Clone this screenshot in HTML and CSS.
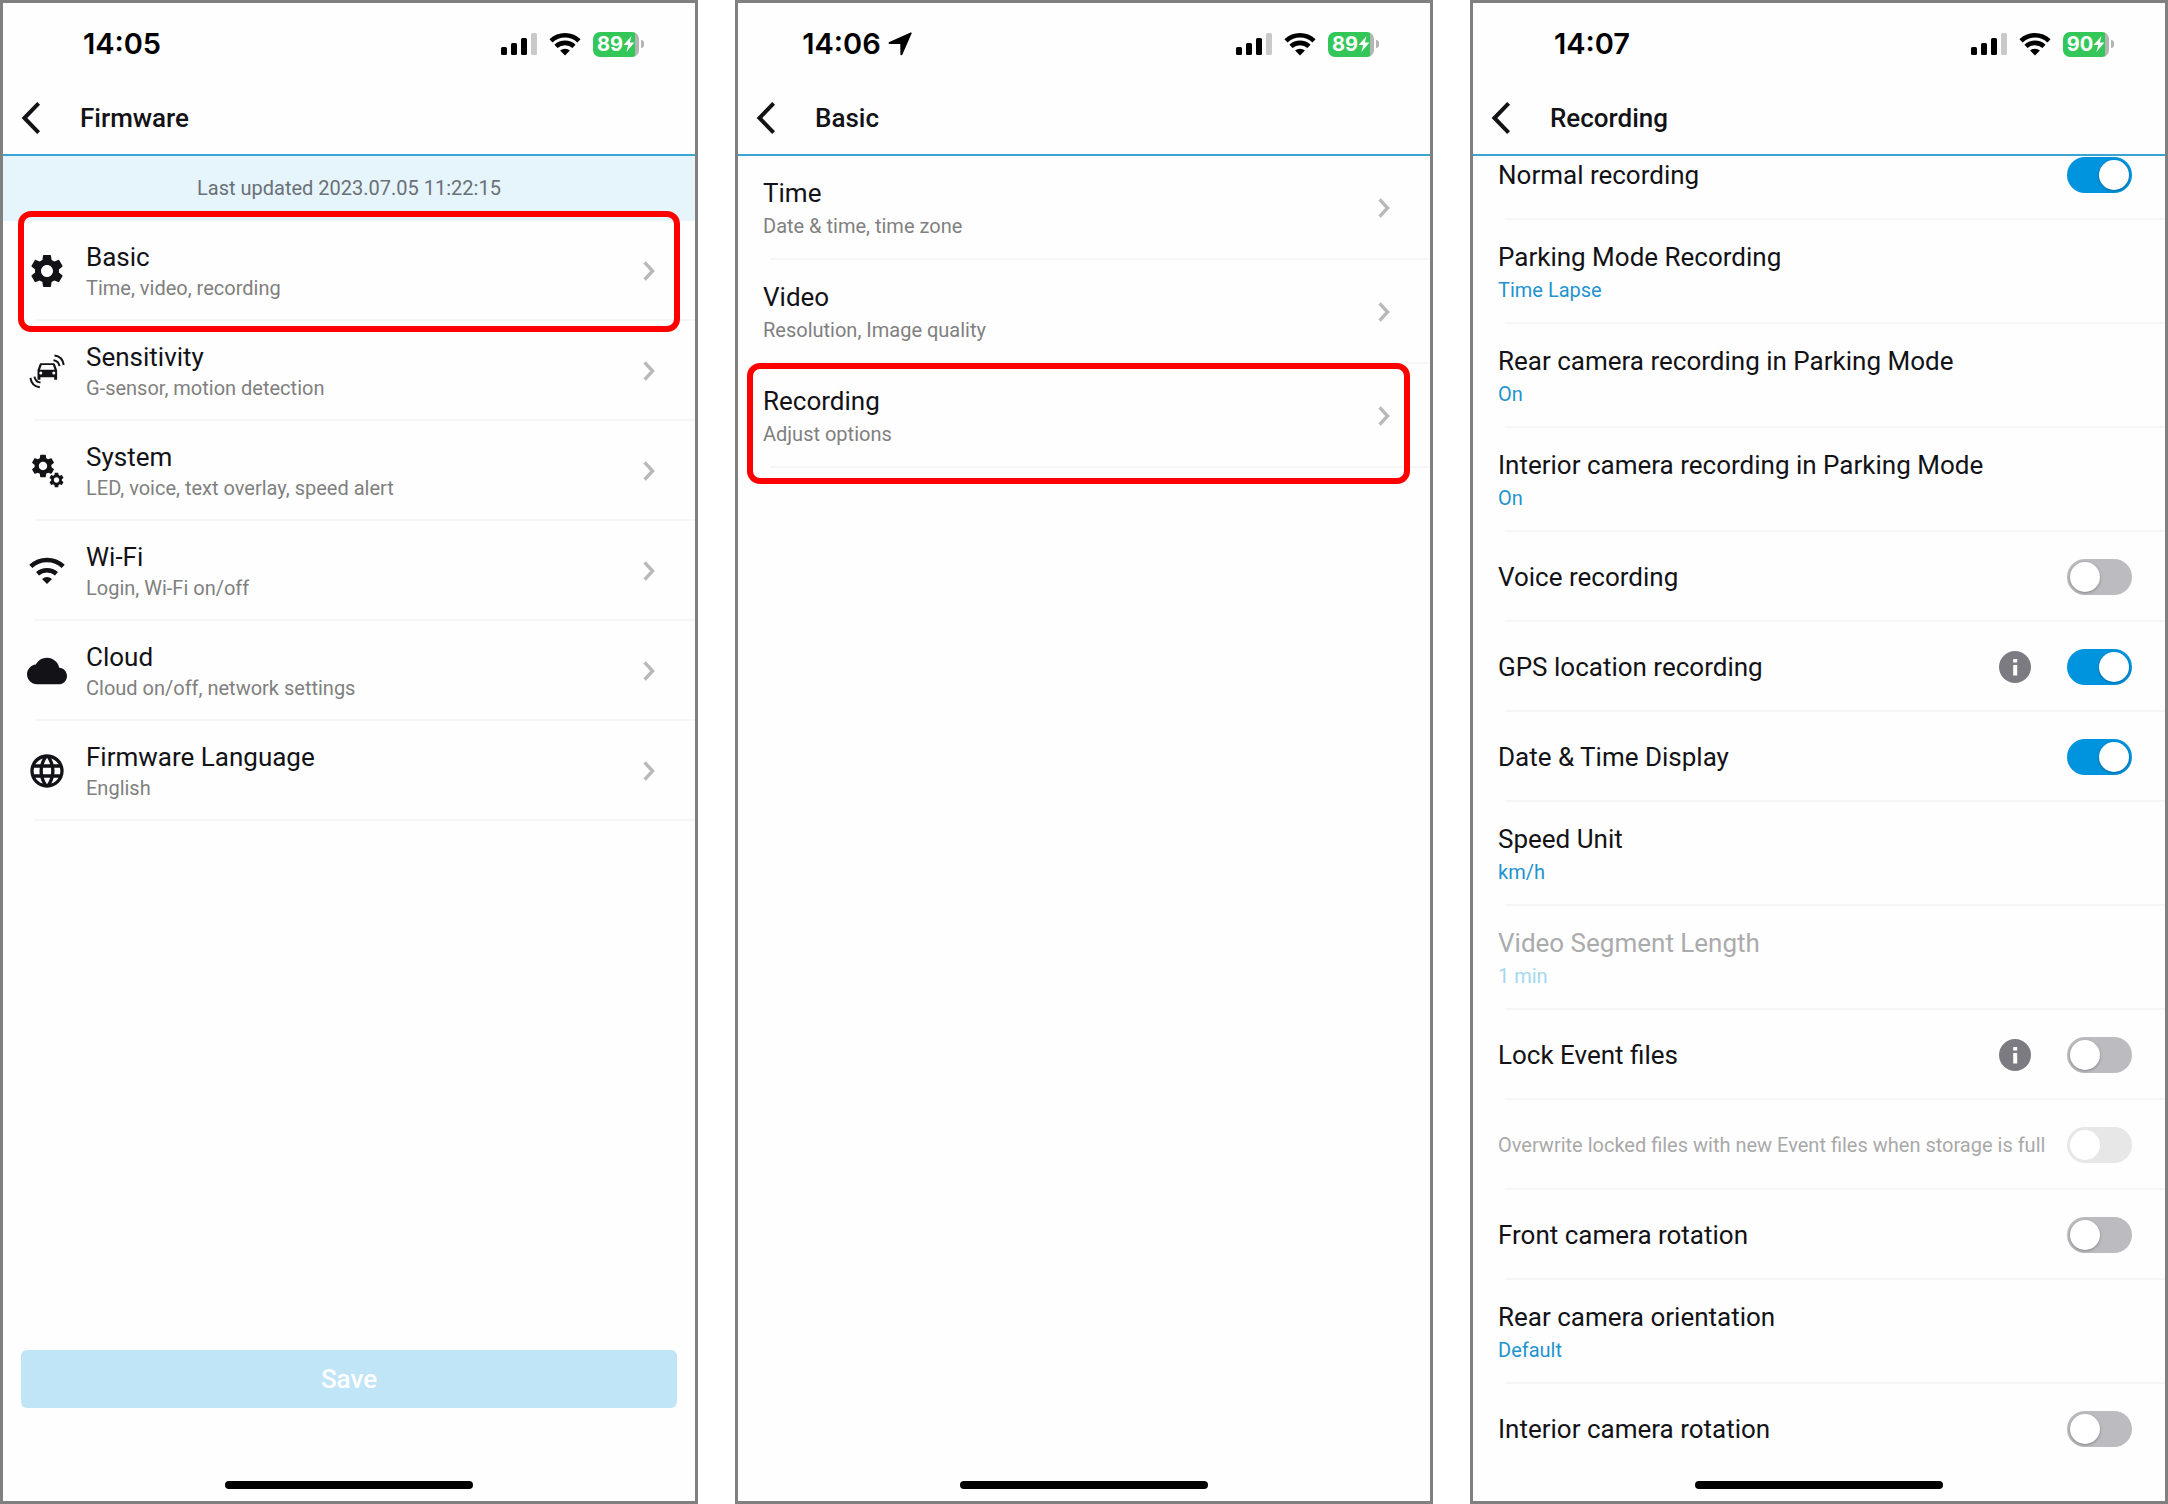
FILE: index.html
```
<!DOCTYPE html>
<html lang="en">
<head>
    <meta charset="UTF-8">
    <meta name="viewport" content="width=device-width, initial-scale=1.0">
    <title>Firmware settings</title>
    <link rel="stylesheet" href="styles.css">
</head>
<body>

<!-- shared icons -->
<svg class="sprite" aria-hidden="true">
    <symbol id="signal" viewBox="0 0 36 24">
        <rect x="0" y="15" width="6" height="8" rx="1.5"/>
        <rect x="10" y="11" width="6" height="12" rx="1.5"/>
        <rect x="20" y="6" width="6" height="17" rx="1.5"/>
        <rect x="30" y="1" width="6" height="22" rx="1.5" fill="#c9c9c9"/>
    </symbol>
    <symbol id="wifi" viewBox="0 0 32 24">
        <path d="M16 23.5l-4.9-4.9a7.3 7.3 0 0 1 9.8 0z"/>
        <path d="M7 14.4a13.2 13.2 0 0 1 18 0M2 8.8a20.4 20.4 0 0 1 28 0" fill="none" stroke="currentColor" stroke-width="4.6"/>
    </symbol>
    <symbol id="bolt" viewBox="0 0 12 16">
        <path d="M8.6 0L0.6 9h4.6L3.4 16 11.4 6.6H6.8z"/>
    </symbol>
    <symbol id="back" viewBox="0 0 20 32">
        <path d="M17.6 1.4L3.4 16l14.2 14.6" fill="none" stroke="currentColor" stroke-width="4"/>
    </symbol>
    <symbol id="chevron" viewBox="0 0 12 20">
        <path d="M1.6 1.4L9.6 10l-8 8.6" fill="none" stroke="currentColor" stroke-width="3.4"/>
    </symbol>
    <symbol id="gear" viewBox="0 0 24 24">
        <path d="M19.14 12.94c.04-.3.06-.61.06-.94 0-.32-.02-.64-.07-.94l2.03-1.58c.18-.14.23-.41.12-.61l-1.92-3.32c-.12-.22-.37-.29-.59-.22l-2.39.96c-.5-.38-1.03-.7-1.62-.94l-.36-2.54c-.04-.24-.24-.41-.48-.41h-3.84c-.24 0-.43.17-.47.41l-.36 2.54c-.59.24-1.13.57-1.62.94l-2.39-.96c-.22-.08-.47 0-.59.22L2.74 8.87c-.12.21-.08.47.12.61l2.03 1.58c-.05.3-.09.63-.09.94s.02.64.07.94l-2.03 1.58c-.18.14-.23.41-.12.61l1.92 3.32c.12.22.37.29.59.22l2.39-.96c.5.38 1.03.7 1.62.94l.36 2.54c.05.24.24.41.48.41h3.84c.24 0 .44-.17.47-.41l.36-2.54c.59-.24 1.13-.56 1.62-.94l2.39.96c.22.08.47 0 .59-.22l1.92-3.32c.12-.22.07-.47-.12-.61l-2.01-1.58zM12 15.6c-1.98 0-3.6-1.62-3.6-3.6s1.62-3.6 3.6-3.6 3.6 1.62 3.6 3.6-1.62 3.6-3.6 3.6z"/>
    </symbol>
</svg>

<div class="screens">

    <!-- Firmware -->
    <section class="phone">
        <div class="status">
            <div class="clock">14:05</div>
            <div class="indicators">
                <svg class="signal"><use href="#signal"/></svg>
                <svg class="wifi"><use href="#wifi"/></svg>
                <div class="battery"><span>89</span><svg><use href="#bolt"/></svg></div>
            </div>
        </div>
        <header class="bar">
            <button class="back" aria-label="Back"><svg><use href="#back"/></svg></button>
            <h1>Firmware</h1>
        </header>
        <main class="content">
            <p class="updated">Last updated 2023.07.05 11:22:15</p>
            <nav class="list icons">
                <a class="row highlight" href="#">
                    <svg class="icon" viewBox="0 0 24 24"><use href="#gear"/></svg>
                    <span class="text"><span class="title">Basic</span><span class="sub">Time, video, recording</span></span>
                    <svg class="chevron"><use href="#chevron"/></svg>
                </a>
                <a class="row" href="#">
                    <svg class="icon" viewBox="0 0 40 40">
                        <path fill-rule="evenodd" d="M14.2 12.2h12.2c.8 0 1.4.5 1.7 1.2l2 5.8v9.6h-2.9v-2.5H13.4v2.5h-2.9v-9.6l2-5.8c.3-.7.9-1.2 1.7-1.2zm.5 1.7l-1.7 4.9h14.6l-1.7-4.900zM13.8 23.4a1.5 1.5 0 1 0 0-3 1.5 1.5 0 0 0 0 3zM26.8 23.4a1.5 1.5 0 1 0 0-3 1.5 1.5 0 0 0 0 3z"/>
                        <path d="M26.5 9.2c3.2.4 5.4 2.6 6 6M27.5 4.6c5 .6 8.4 4.2 9.2 9.4M13.5 31.6c-3.2-.4-5.4-2.6-6-6M12.8 36.2c-5-.6-8.6-4.2-9.4-9.4" fill="none" stroke="currentColor" stroke-width="2"/>
                    </svg>
                    <span class="text"><span class="title">Sensitivity</span><span class="sub">G-sensor, motion detection</span></span>
                    <svg class="chevron"><use href="#chevron"/></svg>
                </a>
                <a class="row" href="#">
                    <svg class="icon" viewBox="0 0 40 40">
                        <use href="#gear" x="2" y="1" width="28" height="28"/>
                        <use href="#gear" x="20.5" y="20" width="18" height="18"/>
                    </svg>
                    <span class="text"><span class="title">System</span><span class="sub">LED, voice, text overlay, speed alert</span></span>
                    <svg class="chevron"><use href="#chevron"/></svg>
                </a>
                <a class="row" href="#">
                    <svg class="icon" viewBox="0 0 40 40">
                        <path d="M20 33l-5-5a8 8 0 0 1 10 0z"/>
                        <path d="M10.500 22.800a14.500 14.500 0 0 1 19 0M3.800 15.400a23.500 23.500 0 0 1 32.400 0" fill="none" stroke="currentColor" stroke-width="4.500"/>
                    </svg>
                    <span class="text"><span class="title">Wi-Fi</span><span class="sub">Login, Wi-Fi on/off</span></span>
                    <svg class="chevron"><use href="#chevron"/></svg>
                </a>
                <a class="row" href="#">
                    <svg class="icon" viewBox="0 0 24 24"><path d="M19.35 10.04C18.67 6.59 15.64 4 12 4 9.11 4 6.6 5.64 5.35 8.04 2.34 8.36 0 10.91 0 14c0 3.31 2.69 6 6 6h13c2.76 0 5-2.24 5-5 0-2.64-2.05-4.78-4.65-4.96z"/></svg>
                    <span class="text"><span class="title">Cloud</span><span class="sub">Cloud on/off, network settings</span></span>
                    <svg class="chevron"><use href="#chevron"/></svg>
                </a>
                <a class="row" href="#">
                    <svg class="icon" viewBox="0 0 24 24"><path d="M11.99 2C6.47 2 2 6.48 2 12s4.47 10 9.99 10C17.52 22 22 17.52 22 12S17.52 2 11.99 2zm6.93 6h-2.95c-.32-1.25-.78-2.45-1.38-3.56 1.84.63 3.37 1.91 4.33 3.56zM12 4.04c.83 1.2 1.48 2.53 1.91 3.96h-3.82c.43-1.43 1.08-2.76 1.91-3.96zM4.26 14C4.1 13.36 4 12.69 4 12s.1-1.36.26-2h3.38c-.08.66-.14 1.32-.14 2s.06 1.34.14 2H4.26zm.82 2h2.95c.32 1.25.78 2.45 1.38 3.56-1.84-.63-3.37-1.9-4.33-3.56zm2.95-8H5.08c.96-1.66 2.49-2.93 4.33-3.56C8.81 5.55 8.35 6.75 8.03 8zM12 19.96c-.83-1.2-1.48-2.53-1.91-3.96h3.82c-.43 1.43-1.08 2.76-1.91 3.96zM14.34 14H9.66c-.09-.66-.16-1.32-.16-2s.07-1.35.16-2h4.68c.09.65.16 1.32.16 2s-.07 1.34-.16 2zm.25 5.56c.6-1.11 1.06-2.31 1.38-3.56h2.95c-.96 1.65-2.49 2.93-4.33 3.56zM16.36 14c.08-.66.14-1.32.14-2s-.06-1.34-.14-2h3.38c.16.64.26 1.31.26 2s-.1 1.36-.26 2h-3.38z"/></svg>
                    <span class="text"><span class="title">Firmware Language</span><span class="sub">English</span></span>
                    <svg class="chevron"><use href="#chevron"/></svg>
                </a>
            </nav>
            <button class="save" disabled>Save</button>
        </main>
        <div class="home"></div>
    </section>

    <!-- Basic -->
    <section class="phone">
        <div class="status">
            <div class="clock">14:06 <svg viewBox="0 0 24 24"><path d="M22.6.6c.8-.3 1.3.2 1 1L14.4 22.6c-.5 1.1-2 .9-2-.4l-.1-10.100-10.600-.2c-1.300 0-1.500-1.500-.4-2z"/></svg></div>
            <div class="indicators">
                <svg class="signal"><use href="#signal"/></svg>
                <svg class="wifi"><use href="#wifi"/></svg>
                <div class="battery"><span>89</span><svg><use href="#bolt"/></svg></div>
            </div>
        </div>
        <header class="bar">
            <button class="back" aria-label="Back"><svg><use href="#back"/></svg></button>
            <h1>Basic</h1>
        </header>
        <main class="content">
            <nav class="list">
                <a class="row" href="#">
                    <span class="text"><span class="title">Time</span><span class="sub">Date &amp; time, time zone</span></span>
                    <svg class="chevron"><use href="#chevron"/></svg>
                </a>
                <a class="row" href="#">
                    <span class="text"><span class="title">Video</span><span class="sub">Resolution, Image quality</span></span>
                    <svg class="chevron"><use href="#chevron"/></svg>
                </a>
                <a class="row highlight" href="#">
                    <span class="text"><span class="title">Recording</span><span class="sub">Adjust options</span></span>
                    <svg class="chevron"><use href="#chevron"/></svg>
                </a>
            </nav>
        </main>
        <div class="home"></div>
    </section>

    <!-- Recording -->
    <section class="phone">
        <div class="status">
            <div class="clock">14:07</div>
            <div class="indicators">
                <svg class="signal"><use href="#signal"/></svg>
                <svg class="wifi"><use href="#wifi"/></svg>
                <div class="battery"><span>90</span><svg><use href="#bolt"/></svg></div>
            </div>
        </div>
        <header class="bar">
            <button class="back" aria-label="Back"><svg><use href="#back"/></svg></button>
            <h1>Recording</h1>
        </header>
        <main class="content">
            <div class="list scrolled">
                <div class="row toggle">
                    <label class="title" for="normal">Normal recording</label>
                    <input class="switch" type="checkbox" id="normal" checked>
                </div>
                <button class="row">
                    <span class="text"><span class="title">Parking Mode Recording</span><span class="sub value">Time Lapse</span></span>
                </button>
                <button class="row">
                    <span class="text"><span class="title">Rear camera recording in Parking Mode</span><span class="sub value">On</span></span>
                </button>
                <button class="row">
                    <span class="text"><span class="title">Interior camera recording in Parking Mode</span><span class="sub value">On</span></span>
                </button>
                <div class="row toggle">
                    <label class="title" for="voice">Voice recording</label>
                    <input class="switch" type="checkbox" id="voice">
                </div>
                <div class="row toggle">
                    <label class="title" for="gps">GPS location recording</label>
                    <button class="info" aria-label="About GPS location recording"><svg viewBox="0 0 32 32"><path d="M14.2 8h4v3.6h-4zM14.2 14h4v10.4h-4z"/></svg></button>
                    <input class="switch" type="checkbox" id="gps" checked>
                </div>
                <div class="row toggle">
                    <label class="title" for="datetime">Date &amp; Time Display</label>
                    <input class="switch" type="checkbox" id="datetime" checked>
                </div>
                <button class="row">
                    <span class="text"><span class="title">Speed Unit</span><span class="sub value">km/h</span></span>
                </button>
                <button class="row" disabled>
                    <span class="text"><span class="title">Video Segment Length</span><span class="sub value">1 min</span></span>
                </button>
                <div class="row toggle">
                    <label class="title" for="lock">Lock Event files</label>
                    <button class="info" aria-label="About Lock Event files"><svg viewBox="0 0 32 32"><path d="M14.2 8h4v3.6h-4zM14.2 14h4v10.4h-4z"/></svg></button>
                    <input class="switch" type="checkbox" id="lock">
                </div>
                <div class="row toggle">
                    <label class="note" for="overwrite">Overwrite locked files with new Event files when storage is full</label>
                    <input class="switch" type="checkbox" id="overwrite" disabled>
                </div>
                <div class="row toggle">
                    <label class="title" for="front">Front camera rotation</label>
                    <input class="switch" type="checkbox" id="front">
                </div>
                <button class="row">
                    <span class="text"><span class="title">Rear camera orientation</span><span class="sub value">Default</span></span>
                </button>
                <div class="row toggle">
                    <label class="title" for="interior">Interior camera rotation</label>
                    <input class="switch" type="checkbox" id="interior">
                </div>
            </div>
        </main>
        <div class="home"></div>
    </section>

</div>

</body>
</html>
```
FILE: styles.css
```
* {
    box-sizing: border-box;
}

body {
    margin: 0;
    background-color: #fff;
    color: #121217;
    font-family: Roboto, "Liberation Sans", sans-serif;
    font-size: 20px;
    line-height: 24px;
}

button {
    border: 0;
    padding: 0;
    background: none;
    color: inherit;
    font: inherit;
}

svg {
    display: block;
    flex: none;
    fill: currentColor;
}

.sprite {
    position: absolute;
    width: 0;
    height: 0;
}

.screens {
    display: grid;
    grid-template-columns: repeat(3, 1fr);
    gap: 37px;
    height: 100vh;
}

.phone {
    display: flex;
    flex-direction: column;
    min-width: 0;
    min-height: 0;
    border: 3px solid #808080;
    background-color: #fefefe;
}

/* status bar */
.status {
    display: flex;
    flex: none;
    align-items: center;
    justify-content: space-between;
    height: 82px;
    padding-right: 52px;
    color: #000;
}

.clock {
    display: flex;
    align-items: center;
    justify-content: center;
    gap: 7px;
    width: 238px;
    font-family: Inter, "Liberation Sans", sans-serif;
    font-size: 29px;
    font-weight: 600;
    line-height: 32px;
}

.clock svg {
    width: 24px;
    height: 24px;
}

.indicators {
    display: flex;
    align-items: center;
    gap: 12px;
}

.signal {
    width: 36px;
    height: 24px;
}

.wifi {
    width: 32px;
    height: 24px;
}

.battery {
    position: relative;
    display: flex;
    align-items: center;
    justify-content: center;
    width: 46px;
    height: 25px;
    margin-right: 4px;
    border-radius: 7px;
    background: linear-gradient(to right, #33c759 42px, #b4b4b4 42px);
    color: #fff;
    font-family: Inter, "Liberation Sans", sans-serif;
    font-weight: 700;
}

.battery svg {
    width: 12px;
    height: 16px;
}

.battery::after {
    content: "";
    position: absolute;
    top: 8px;
    right: -5px;
    width: 3px;
    height: 8px;
    border-radius: 0 4px 4px 0;
    background-color: #b4b4b4;
}

/* title bar */
.bar {
    display: flex;
    flex: none;
    align-items: center;
    gap: 39px;
    height: 71px;
    padding: 0 18px 4px;
    border-bottom: 2px solid #3aa5d3;
}

.back svg {
    width: 20px;
    height: 32px;
}

h1 {
    margin: 0;
    font-size: 26px;
    font-weight: 500;
    line-height: 30px;
}

.content {
    display: flex;
    flex: 1;
    flex-direction: column;
    min-height: 0;
    overflow: hidden;
}

.updated {
    margin: 0;
    padding: 20px 0 21px;
    background-color: #e6f4fc;
    color: #6a7077;
    text-align: center;
}

/* lists */
.row {
    position: relative;
    display: flex;
    align-items: center;
    width: 100%;
    padding: 22px 40px 22px 25px;
    color: inherit;
    text-align: left;
    text-decoration: none;
}

.row::before {
    content: "";
    position: absolute;
    right: 0;
    bottom: 0;
    left: 32px;
    height: 2px;
    background-color: #f6f6f6;
}

.text {
    display: flex;
    flex: 1;
    flex-direction: column;
    gap: 6px;
}

.title {
    flex: 1;
    font-size: 26px;
    line-height: 30px;
}

.sub {
    color: #808080;
}

.value {
    color: #1f93cf;
}

.chevron {
    width: 12px;
    height: 20px;
    color: #b9b9b9;
}

.icons .row {
    gap: 19px;
    padding: 21px 40px 21px 24px;
}

.icons .text {
    gap: 4px;
}

.icon {
    width: 40px;
    height: 40px;
}

.highlight::after {
    content: "";
    position: absolute;
    z-index: 1;
    top: -1px;
    right: 20px;
    bottom: -16px;
    left: 9px;
    border: 6px solid #f00;
    border-radius: 13px;
}

.icons .highlight::after {
    top: -10px;
    right: 15px;
    bottom: -11px;
    left: 15px;
}

.scrolled {
    margin-top: -26px;
}

.row:disabled .title {
    color: #ababad;
}

.row:disabled .value {
    color: #a5d8ee;
}

.toggle {
    gap: 36px;
    height: 90px;
    padding: 0 33px 0 25px;
}

/* long label may run into the gap before its switch */
.note {
    flex: 1;
    min-width: 0;
    color: #a9a9a9;
    white-space: nowrap;
}

.switch {
    position: relative;
    flex: none;
    width: 65px;
    height: 36px;
    margin: 0;
    border-radius: 18px;
    background-color: #bcbbc0;
    appearance: none;
}

.switch::before {
    content: "";
    position: absolute;
    top: 3px;
    left: 3px;
    width: 30px;
    height: 30px;
    border-radius: 50%;
    background-color: #fff;
    box-shadow: 0 1px 3px rgba(0, 0, 0, 0.3);
}

.switch:checked {
    background-color: #0093de;
}

.switch:checked::before {
    right: 3px;
    left: auto;
}

.switch:disabled {
    background-color: #e7e7e7;
}

.switch:disabled::before {
    box-shadow: none;
}

.info {
    width: 32px;
    height: 32px;
    border-radius: 50%;
    background-color: #7c7b82;
    color: #fff;
}

.save {
    flex: none;
    height: 58px;
    margin: auto 18px 39px;
    border-radius: 6px;
    background-color: #c0e5f6;
    color: #fff;
    font-size: 26px;
    font-weight: 500;
}

.home {
    flex: none;
    padding: 34px 0 12px;
}

.home::before {
    content: "";
    display: block;
    width: 248px;
    height: 8px;
    margin: 0 auto;
    border-radius: 4px;
    background-color: #000;
}
```
